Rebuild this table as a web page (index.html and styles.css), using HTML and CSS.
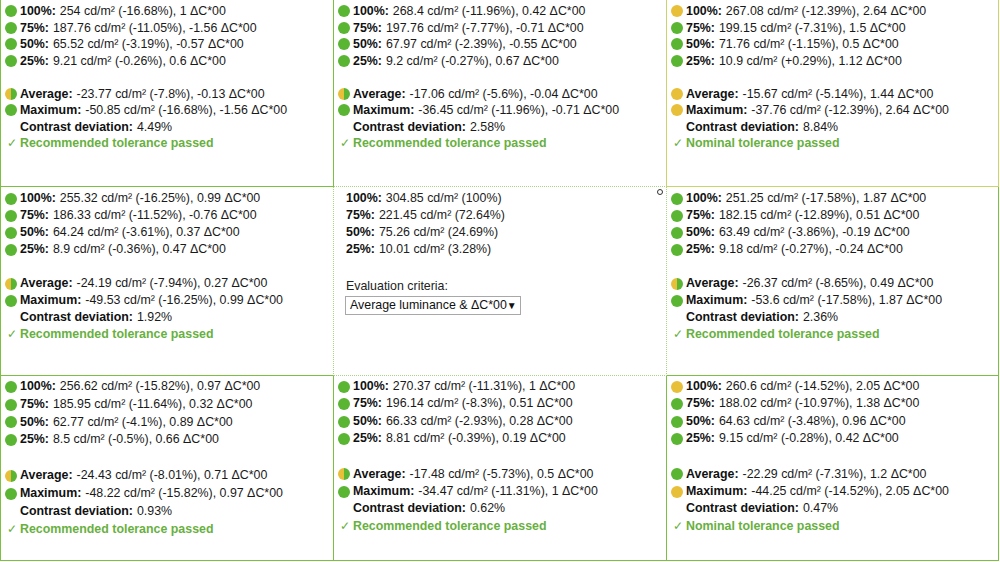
FILE: index.html
```html
<!DOCTYPE html>
<html>
<head>
<meta charset="utf-8">
<link rel="stylesheet" href="styles.css">
</head>
<body>
<div class="grid">
  <div class="cell r1 c1">
    <div class="ln"><span class="dot g"></span><b>100%:</b> 254 cd/m² (-16.68%), 1 ΔC*00</div>
    <div class="ln"><span class="dot g"></span><b>75%:</b> 187.76 cd/m² (-11.05%), -1.56 ΔC*00</div>
    <div class="ln"><span class="dot g"></span><b>50%:</b> 65.52 cd/m² (-3.19%), -0.57 ΔC*00</div>
    <div class="ln"><span class="dot g"></span><b>25%:</b> 9.21 cd/m² (-0.26%), 0.6 ΔC*00</div>
    <div class="ln blank"></div>
    <div class="ln"><span class="dot h"></span><b>Average:</b> -23.77 cd/m² (-7.8%), -0.13 ΔC*00</div>
    <div class="ln"><span class="dot g"></span><b>Maximum:</b> -50.85 cd/m² (-16.68%), -1.56 ΔC*00</div>
    <div class="ln"><span class="dot n"></span><b>Contrast deviation:</b> 4.49%</div>
    <div class="ln pass"><span class="chk">✓</span>Recommended tolerance passed</div>
  </div>
  <div class="cell r1 c2 above-mid">
    <div class="ln"><span class="dot g"></span><b>100%:</b> 268.4 cd/m² (-11.96%), 0.42 ΔC*00</div>
    <div class="ln"><span class="dot g"></span><b>75%:</b> 197.76 cd/m² (-7.77%), -0.71 ΔC*00</div>
    <div class="ln"><span class="dot g"></span><b>50%:</b> 67.97 cd/m² (-2.39%), -0.55 ΔC*00</div>
    <div class="ln"><span class="dot g"></span><b>25%:</b> 9.2 cd/m² (-0.27%), 0.67 ΔC*00</div>
    <div class="ln blank"></div>
    <div class="ln"><span class="dot h"></span><b>Average:</b> -17.06 cd/m² (-5.6%), -0.04 ΔC*00</div>
    <div class="ln"><span class="dot g"></span><b>Maximum:</b> -36.45 cd/m² (-11.96%), -0.71 ΔC*00</div>
    <div class="ln"><span class="dot n"></span><b>Contrast deviation:</b> 2.58%</div>
    <div class="ln pass"><span class="chk">✓</span>Recommended tolerance passed</div>
  </div>
  <div class="cell r1 c3 nominal">
    <div class="ln"><span class="dot y"></span><b>100%:</b> 267.08 cd/m² (-12.39%), 2.64 ΔC*00</div>
    <div class="ln"><span class="dot g"></span><b>75%:</b> 199.15 cd/m² (-7.31%), 1.5 ΔC*00</div>
    <div class="ln"><span class="dot g"></span><b>50%:</b> 71.76 cd/m² (-1.15%), 0.5 ΔC*00</div>
    <div class="ln"><span class="dot g"></span><b>25%:</b> 10.9 cd/m² (+0.29%), 1.12 ΔC*00</div>
    <div class="ln blank"></div>
    <div class="ln"><span class="dot y"></span><b>Average:</b> -15.67 cd/m² (-5.14%), 1.44 ΔC*00</div>
    <div class="ln"><span class="dot y"></span><b>Maximum:</b> -37.76 cd/m² (-12.39%), 2.64 ΔC*00</div>
    <div class="ln"><span class="dot n"></span><b>Contrast deviation:</b> 8.84%</div>
    <div class="ln pass"><span class="chk">✓</span>Nominal tolerance passed</div>
  </div>

  <div class="cell r2 c1 left-mid">
    <div class="ln"><span class="dot g"></span><b>100%:</b> 255.32 cd/m² (-16.25%), 0.99 ΔC*00</div>
    <div class="ln"><span class="dot g"></span><b>75%:</b> 186.33 cd/m² (-11.52%), -0.76 ΔC*00</div>
    <div class="ln"><span class="dot g"></span><b>50%:</b> 64.24 cd/m² (-3.61%), 0.37 ΔC*00</div>
    <div class="ln"><span class="dot g"></span><b>25%:</b> 8.9 cd/m² (-0.36%), 0.47 ΔC*00</div>
    <div class="ln blank"></div>
    <div class="ln"><span class="dot h"></span><b>Average:</b> -24.19 cd/m² (-7.94%), 0.27 ΔC*00</div>
    <div class="ln"><span class="dot g"></span><b>Maximum:</b> -49.53 cd/m² (-16.25%), 0.99 ΔC*00</div>
    <div class="ln"><span class="dot n"></span><b>Contrast deviation:</b> 1.92%</div>
    <div class="ln pass"><span class="chk">✓</span>Recommended tolerance passed</div>
  </div>
  <div class="cell r2 c2 mid">
    <span class="gear"></span>
    <div class="ln"><b>100%:</b> 304.85 cd/m² (100%)</div>
    <div class="ln"><b>75%:</b> 221.45 cd/m² (72.64%)</div>
    <div class="ln"><b>50%:</b> 75.26 cd/m² (24.69%)</div>
    <div class="ln"><b>25%:</b> 10.01 cd/m² (3.28%)</div>
    <div class="ln blank2"></div>
    <div class="ln">Evaluation criteria:</div>
    <div class="select"><span>Average luminance &amp; ΔC*00</span><span class="arrow">▼</span></div>
  </div>
  <div class="cell r2 c3">
    <div class="ln"><span class="dot g"></span><b>100%:</b> 251.25 cd/m² (-17.58%), 1.87 ΔC*00</div>
    <div class="ln"><span class="dot g"></span><b>75%:</b> 182.15 cd/m² (-12.89%), 0.51 ΔC*00</div>
    <div class="ln"><span class="dot g"></span><b>50%:</b> 63.49 cd/m² (-3.86%), -0.19 ΔC*00</div>
    <div class="ln"><span class="dot g"></span><b>25%:</b> 9.18 cd/m² (-0.27%), -0.24 ΔC*00</div>
    <div class="ln blank"></div>
    <div class="ln"><span class="dot h"></span><b>Average:</b> -26.37 cd/m² (-8.65%), 0.49 ΔC*00</div>
    <div class="ln"><span class="dot g"></span><b>Maximum:</b> -53.6 cd/m² (-17.58%), 1.87 ΔC*00</div>
    <div class="ln"><span class="dot n"></span><b>Contrast deviation:</b> 2.36%</div>
    <div class="ln pass"><span class="chk">✓</span>Recommended tolerance passed</div>
  </div>

  <div class="cell r3 c1">
    <div class="ln"><span class="dot g"></span><b>100%:</b> 256.62 cd/m² (-15.82%), 0.97 ΔC*00</div>
    <div class="ln"><span class="dot g"></span><b>75%:</b> 185.95 cd/m² (-11.64%), 0.32 ΔC*00</div>
    <div class="ln"><span class="dot g"></span><b>50%:</b> 62.77 cd/m² (-4.1%), 0.89 ΔC*00</div>
    <div class="ln"><span class="dot g"></span><b>25%:</b> 8.5 cd/m² (-0.5%), 0.66 ΔC*00</div>
    <div class="ln blank"></div>
    <div class="ln"><span class="dot h"></span><b>Average:</b> -24.43 cd/m² (-8.01%), 0.71 ΔC*00</div>
    <div class="ln"><span class="dot g"></span><b>Maximum:</b> -48.22 cd/m² (-15.82%), 0.97 ΔC*00</div>
    <div class="ln"><span class="dot n"></span><b>Contrast deviation:</b> 0.93%</div>
    <div class="ln pass"><span class="chk">✓</span>Recommended tolerance passed</div>
  </div>
  <div class="cell r3 c2">
    <div class="ln"><span class="dot g"></span><b>100%:</b> 270.37 cd/m² (-11.31%), 1 ΔC*00</div>
    <div class="ln"><span class="dot g"></span><b>75%:</b> 196.14 cd/m² (-8.3%), 0.51 ΔC*00</div>
    <div class="ln"><span class="dot g"></span><b>50%:</b> 66.33 cd/m² (-2.93%), 0.28 ΔC*00</div>
    <div class="ln"><span class="dot g"></span><b>25%:</b> 8.81 cd/m² (-0.39%), 0.19 ΔC*00</div>
    <div class="ln blank"></div>
    <div class="ln"><span class="dot h"></span><b>Average:</b> -17.48 cd/m² (-5.73%), 0.5 ΔC*00</div>
    <div class="ln"><span class="dot g"></span><b>Maximum:</b> -34.47 cd/m² (-11.31%), 1 ΔC*00</div>
    <div class="ln"><span class="dot n"></span><b>Contrast deviation:</b> 0.62%</div>
    <div class="ln pass"><span class="chk">✓</span>Recommended tolerance passed</div>
  </div>
  <div class="cell r3 c3">
    <div class="ln"><span class="dot y"></span><b>100%:</b> 260.6 cd/m² (-14.52%), 2.05 ΔC*00</div>
    <div class="ln"><span class="dot g"></span><b>75%:</b> 188.02 cd/m² (-10.97%), 1.38 ΔC*00</div>
    <div class="ln"><span class="dot g"></span><b>50%:</b> 64.63 cd/m² (-3.48%), 0.96 ΔC*00</div>
    <div class="ln"><span class="dot g"></span><b>25%:</b> 9.15 cd/m² (-0.28%), 0.42 ΔC*00</div>
    <div class="ln blank"></div>
    <div class="ln"><span class="dot g"></span><b>Average:</b> -22.29 cd/m² (-7.31%), 1.2 ΔC*00</div>
    <div class="ln"><span class="dot y"></span><b>Maximum:</b> -44.25 cd/m² (-14.52%), 2.05 ΔC*00</div>
    <div class="ln"><span class="dot n"></span><b>Contrast deviation:</b> 0.47%</div>
    <div class="ln pass"><span class="chk">✓</span>Nominal tolerance passed</div>
  </div>
</div>
</body>
</html>
```

FILE: styles.css
```css
html, body {
  margin: 0;
  padding: 0;
  background: #ffffff;
}
body {
  font-family: "Liberation Sans", Arial, sans-serif;
  font-size: 12.4px;
  color: #1a1a1a;
  width: 1000px;
  height: 562px;
  overflow: hidden;
}
.grid {
  display: grid;
  grid-template-columns: 334px 333px 332px;
  grid-template-rows: 187px 189px 185px;
  width: 999px;
}
.cell {
  box-sizing: border-box;
  border-right: 1px solid #7cc043;
  border-bottom: 1px solid #7cc043;
  padding-left: 3px;
  position: relative;
  white-space: nowrap;
}
.cell.c1 { border-left: 1px solid #7cc043; padding-left: 3px; }
.cell.r1 { line-height: 16.5px; padding-top: 3px; }
.cell.r2 { line-height: 17px; padding-top: 3px; }
.cell.r3 { line-height: 17.8px; padding-top: 2px; }
.cell.r3.c2, .cell.r3.c3 { line-height: 17.4px; }
.cell.nominal { border-right-color: #c9d46a; border-bottom-color: #c9d46a; }
.cell.r1.c2 { border-right-color: #c9d46a; }
.cell.above-mid { border-bottom: 1px dotted #a9d585; }
.cell.left-mid { border-right: 1px dotted #a9d585; }
.cell.mid {
  border-right: 1px dotted #a9d585;
  border-bottom: 1px dotted #a9d585;
  padding-left: 12px;
  color: #222;
}
.ln {
  display: flex;
  align-items: center;
}
.ln b {
  font-weight: bold;
  color: #111;
  margin-right: 4px;
}
.blank { height: 16.5px; }
.r2 .blank { height: 17px; }
.r3 .blank { height: 18px; }
.blank2 { height: 20px; }
.dot {
  display: inline-block;
  width: 12px;
  height: 12px;
  border-radius: 50%;
  margin-left: 1px;
  margin-right: 3px;
  flex: none;
}
.dot.g { background: #5ab532; }
.dot.y { background: #e8bf38; }
.dot.h { background: linear-gradient(90deg, #e8bf38 50%, #5ab532 50%); }
.dot.n { background: transparent; }
.pass {
  color: #68b040;
  font-weight: bold;
}
.chk {
  display: inline-block;
  width: 13px;
  margin-left: 1px;
  margin-right: 2px;
  font-weight: normal;
  color: #68b040;
  text-align: center;
}
.select {
  display: flex;
  align-items: center;
  box-sizing: border-box;
  width: 176px;
  height: 19px;
  margin-top: 1px;
  margin-left: -1px;
  border: 1px solid #a8a8a8;
  padding: 0 6px 0 4px;
  line-height: 17px;
  color: #111;
}
.select .arrow {
  margin-left: auto;
  font-size: 10px;
}
.gear {
  position: absolute;
  top: 2px;
  right: 3px;
  width: 4px;
  height: 4px;
  border: 1.5px solid #333;
  border-radius: 50%;
}
```
